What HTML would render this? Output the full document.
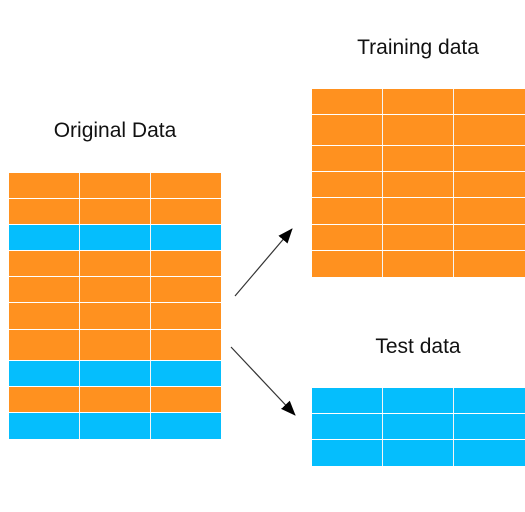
<!DOCTYPE html>
<html><head><style>
body{margin:0;width:525px;height:512px;background:#fff;position:relative;overflow:hidden;font-family:"Liberation Sans",sans-serif}
.t{position:absolute;font-size:21px;color:#111;transform:translateX(-50%);white-space:nowrap}
.r{position:absolute;display:flex}
.r div{height:100%;border-right:1px solid #f4f4f4;box-sizing:border-box}
.o{background:#FF911F}.b{background:#05BEFD}
</style></head><body>
<div class="t" style="left:115px;top:119px">Original Data</div>
<div class="t" style="left:418px;top:36px">Training data</div>
<div class="t" style="left:418px;top:335px">Test data</div>
<div id="L"></div>
<svg width="525" height="512" style="position:absolute;left:0;top:0">
<defs><marker id="a" markerWidth="16" markerHeight="14" refX="14" refY="6" orient="auto" markerUnits="userSpaceOnUse"><path d="M0,0 L15,6 L0,12z" fill="#000"/></marker></defs>
<line x1="235" y1="296" x2="292" y2="229" stroke="#333" stroke-width="1.2" marker-end="url(#a)"/>
<line x1="231" y1="347" x2="295" y2="415" stroke="#333" stroke-width="1.2" marker-end="url(#a)"/>
</svg>
<script>
function tbl(x,w,ys,cls){var h='';for(var i=0;i<ys.length-1;i++){h+='<div class="r '+cls[i]+'" style="left:'+x+'px;top:'+ys[i]+'px;width:'+w+'px;height:'+(ys[i+1]-ys[i]-1)+'px"><div style="width:71px"></div><div style="width:71px"></div><div style="width:70px;border:0"></div></div>'}return h}
var L=tbl(9,212,[173,199,225,251,277,303,330,361,387,413,440],['o','o','b','o','o','o','o','b','o','b']);
L+=tbl(312,213,[89,115,146,172,198,225,251,278],['o','o','o','o','o','o','o']);
L+=tbl(312,213,[388,414,440,467],['b','b','b']);
document.getElementById('L').innerHTML=L;
</script>
</body></html>
